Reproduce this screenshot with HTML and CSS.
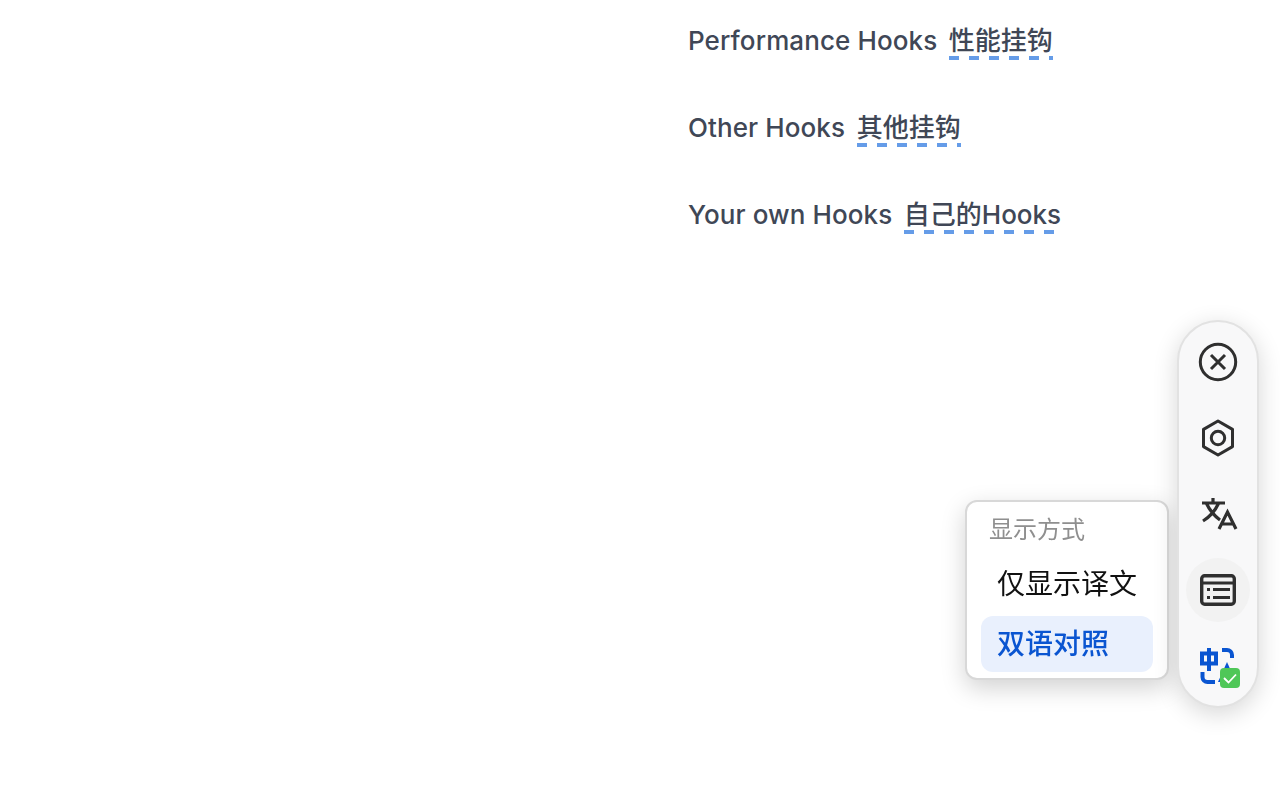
FILE: index.html
```html
<!DOCTYPE html>
<html lang="zh-CN">

<head>
    <meta charset="UTF-8">
    <meta name="viewport" content="width=device-width, initial-scale=1.0">
    <title>Hooks</title>
    <link rel="stylesheet" href="styles.css">
</head>

<body>

    <ul class="toc">
        <li><span class="orig">Performance Hooks</span><span class="trans">性能挂钩</span></li>
        <li><span class="orig">Other Hooks</span><span class="trans">其他挂钩</span></li>
        <li><span class="orig">Your own Hooks</span><span class="trans">自己的Hooks</span></li>
    </ul>

    <div class="float-menu">
        <div class="float-title">显示方式</div>
        <div class="float-option">仅显示译文</div>
        <div class="float-option active">双语对照</div>
    </div>

    <div class="float-bar">
        <button class="bar-btn">
            <svg width="40" height="40" viewBox="0 0 40 40" fill="none" stroke="#2f2f2f" stroke-width="3">
                <circle cx="20" cy="20" r="17.700"/>
                <path d="M13 13l14 14M27 13L13 27"/>
            </svg>
        </button>
        <button class="bar-btn">
            <svg width="40" height="40" viewBox="0 0 40 40" fill="none" stroke="#2f2f2f" stroke-width="3" stroke-linejoin="round">
                <path d="M20 3l14.500 8.400v17.200L20 37 5.500 28.600V11.400z"/>
                <circle cx="20" cy="20" r="6.700"/>
            </svg>
        </button>
        <button class="bar-btn">
            <svg width="40" height="40" viewBox="0 0 40 40" fill="none" stroke="#2f2f2f" stroke-width="3.200">
                <path d="M4 9h23M15 4v5M20.500 9.500C17 17 11.500 23 5 27M8.500 9.500C11.500 16 16 21.500 22 26"/>
                <path d="M21 35l8.500-17 8.500 17M23.500 30h12"/>
            </svg>
        </button>
        <button class="bar-btn current">
            <svg width="40" height="40" viewBox="0 0 40 40" fill="none" stroke="#2f2f2f" stroke-width="3.400">
                <rect x="3.700" y="5.700" width="32.600" height="28.600" rx="3"/>
                <path d="M3.700 13h32.600" stroke-width="3"/>
                <path d="M15 19.500h17M15 27.500h17M9 19.500h3M9 27.500h3" stroke-width="3"/>
            </svg>
        </button>
        <button class="bar-btn">
            <svg width="44" height="44" viewBox="0 0 44 44" fill="none">
                <g stroke="#0a55d1" stroke-width="4">
                    <path d="M13 4v23M6 9.500h14v10H6z"/>
                    <path d="M26 6h5a5 5 0 0 1 5 5v3M6.500 28v5a5 5 0 0 0 5 5h7.500"/>
                </g>
                <path d="M31 18l-9 20h18z" fill="#0a55d1"/>
                <rect x="24" y="24" width="20" height="20" rx="4" fill="#4fc758"/>
                <path d="M28 34l4.500 4.500 7.500-8" stroke="#fff" stroke-width="1.800"/>
            </svg>
        </button>
    </div>

</body>

</html>
```

FILE: styles.css
```css
html,
body {
    margin: 0;
    padding: 0;
    background: #fff;
}

body {
    height: 800px;
    overflow: hidden;
    font-family: Inter, "Noto Sans CJK SC", sans-serif;
}

.toc {
    list-style: none;
    margin: 0;
    padding: 22px 0 0 688px;
    display: flex;
    flex-direction: column;
    gap: 49px;
}
.toc li {
    display: flex;
    height: 38px;
    align-items: flex-start;
    font-size: 26px;
    line-height: 38px;
    font-weight: 450;
    color: #404756;
}
.toc .orig {
    letter-spacing: 0.1px;
}
.toc .trans {
    margin-left: 11.500px;
    height: 38px;
    font-weight: 500;
    background: repeating-linear-gradient(to right, #659ce8 0, #659ce8 10px, transparent 10px, transparent 20px) left bottom / 100% 4px no-repeat;
}

.float-menu {
    position: fixed;
    left: 965px;
    top: 500px;
    width: 204px;
    height: 180px;
    box-sizing: border-box;
    padding: 12px 14px;
    background: #fff;
    border: 2px solid #d8d8d8;
    border-radius: 12px;
    box-shadow: 0 8px 24px rgba(0, 0, 0, 0.18);
}
.float-title {
    padding-left: 8px;
    font-size: 24px;
    line-height: 32px;
    color: #8f8f8f;
}
.float-option {
    height: 56px;
    padding-left: 16px;
    border-radius: 12px;
    font-size: 28px;
    line-height: 56px;
    color: #111;
}
.float-option:nth-child(2) {
    margin-top: 10px;
}
.float-option.active {
    margin-top: 4px;
    font-weight: 500;
    background: #e9f0fd;
    color: #0a55d1;
}

.float-bar {
    position: fixed;
    left: 1177px;
    top: 320px;
    width: 82px;
    height: 388px;
    box-sizing: border-box;
    display: flex;
    flex-direction: column;
    align-items: center;
    padding-top: 8px;
    gap: 12px;
    background: #f8f8f9;
    border: 2px solid #e2e2e2;
    border-radius: 41px;
    box-shadow: 0 6px 24px rgba(0, 0, 0, 0.16);
}
.bar-btn {
    width: 64px;
    height: 64px;
    padding: 0;
    border: none;
    border-radius: 50%;
    background: none;
    display: flex;
    align-items: center;
    justify-content: center;
}
.bar-btn.current {
    background: #f2f2f2;
}
```
